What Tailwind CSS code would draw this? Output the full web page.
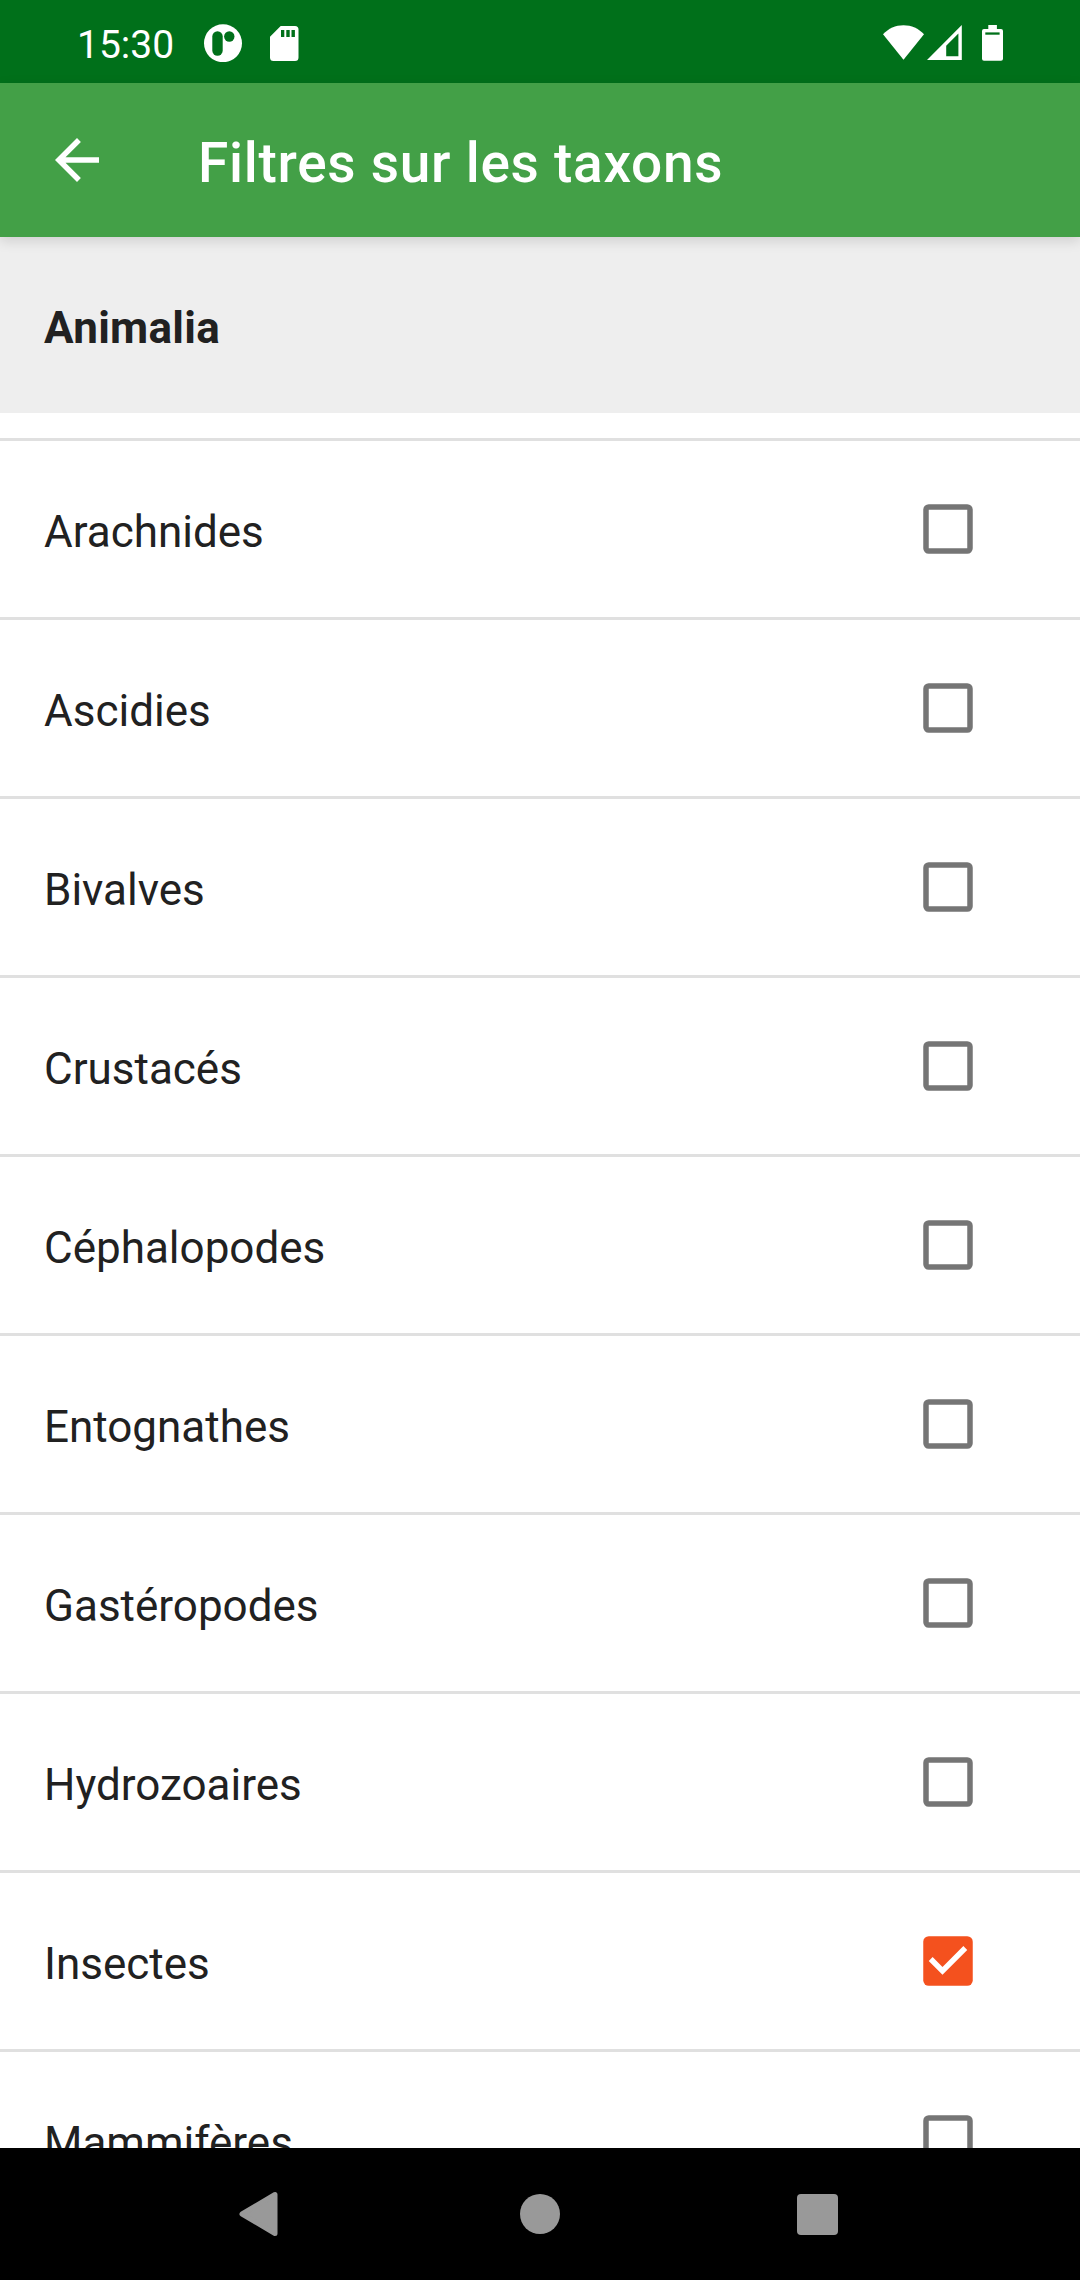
<!DOCTYPE html>
<html lang="fr">
<head>
<meta charset="utf-8">
<title>Filtres sur les taxons</title>
<script src="https://cdn.jsdelivr.net/npm/@tailwindcss/browser@4"></script>
</head>
<body class="bg-white">
<div class="flex h-[2280px] w-[1080px] flex-col overflow-hidden font-[Roboto,sans-serif] text-[#212121]">
  <div class="flex h-[83px] shrink-0 items-start bg-[#00701a] pl-[77px] text-white">
    <span class="mt-[21px] w-[114px] text-[39px] leading-[48px] whitespace-nowrap">15:30</span>
    <svg class="mt-6 ml-[13px] h-[38px] w-[38px]" viewBox="0 0 38 38"><circle cx="19" cy="19.2" r="19" fill="#fff"/><rect x="8.3" y="7.3" width="10.4" height="24.5" rx="5.2" fill="#00701a"/><circle cx="25.3" cy="12.5" r="5.2" fill="#00701a"/></svg>
    <svg class="mt-[26px] ml-7 h-[35px] w-[29px]" viewBox="0 0 29 35"><path d="M10.7 0H25a3.5 3.5 0 0 1 3.5 3.5V31.500a3.500 3.500 0 0 1-3.500 3.500H3.500A3.500 3.500 0 0 1 0 31.500V10.700z" fill="#fff"/><path d="M11 4h3.300v7H11zM16.300 4h3.400v7h-3.400zM21.500 4h3.400v7h-3.400z" fill="#00701a"/></svg>
    <svg class="mt-[25px] ml-[584px] h-[35px] w-[41px]" viewBox="0 0 41 35"><path d="M0 9.300C5.500 3.500 12.500.3 20.500.3S35.500 3.500 41 9.300L20.500 34.700z" fill="#fff"/></svg>
    <svg class="mt-[25px] ml-[3px] h-[35px] w-[35px]" viewBox="0 0 35 35"><path fill-rule="evenodd" d="M34.800 0V35H0zM31.400 8.500L19.200 20.700V31.300H31.400z" fill="#fff"/></svg>
    <svg class="mt-[25px] ml-5 h-9 w-[21px]" viewBox="0 0 21 36"><path d="M6.300 0H14.900V4H19a2 2 0 0 1 2 2V33.700a2 2 0 0 1-2 2H2a2 2 0 0 1-2-2V6a2 2 0 0 1 2-2H6.300z" fill="#fff"/><path d="M3.300 7.400h14.300v2.300H3.300z" fill="#00701a"/></svg>
  </div>
  <header class="relative z-10 flex h-[154px] shrink-0 items-center bg-[#43a047] pl-11 text-white shadow-[0_4px_12px_rgba(0,0,0,0.13)]">
    <svg class="size-[66px]" viewBox="0 0 24 24"><path d="M20 11H7.830l5.590-5.590L12 4l-8 8 8 8 1.410-1.410L7.830 13H20v-2z" fill="#fff"/></svg>
    <h1 class="ml-[88px] pt-1.5 text-[55px] leading-[64px] font-medium tracking-[0.72px] whitespace-nowrap">Filtres sur les taxons</h1>
  </header>
  <main class="min-h-0 flex-1 overflow-hidden">
    <h2 class="mb-[25px] h-44 bg-[#eee] pt-[65px] pl-11 text-[44px] leading-[52px] font-bold tracking-[0.3px]">Animalia</h2>
    <ul id="taxa"></ul>
  </main>
  <nav class="flex h-[132px] shrink-0 items-center bg-black pl-[239px]">
    <svg class="h-[46px] w-10" viewBox="0 0 40 46"><path d="M36 3.500V42.500L3 23z" fill="#999" stroke="#999" stroke-width="5" stroke-linejoin="round"/></svg>
    <div class="ml-[241px] size-10 rounded-full bg-[#999]"></div>
    <div class="ml-[237px] size-[41px] rounded-[4px] bg-[#999]"></div>
  </nav>
</div>
<script>
  const taxa = ["Arachnides", "Ascidies", "Bivalves", "Crustacés", "Céphalopodes", "Entognathes", "Gastéropodes", "Hydrozoaires", "Insectes", "Mammifères"];
  const checked = new Set(["Insectes"]);
  const box = on => on
    ? '<rect x="3" y="3" width="18" height="18" rx="2" fill="#f4511e"/><path d="M10 17l-5-5 1.410-1.410L10 14.170l7.590-7.590L19 8z" fill="#fff"/>'
    : '<path d="M19 5v14H5V5h14m0-2H5a2 2 0 0 0-2 2v14a2 2 0 0 0 2 2h14a2 2 0 0 0 2-2V5a2 2 0 0 0-2-2z" fill="#757575"/>';
  document.getElementById("taxa").innerHTML = taxa.map(name => `
    <li class="flex h-[179px] items-center justify-between border-t-3 border-[#e0e0e0] pr-[99px] pl-11">
      <span class="pt-1.5 text-[44px] leading-[52px]">${name}</span>
      <svg class="size-[66px]" viewBox="0 0 24 24">${box(checked.has(name))}</svg>
    </li>`).join("");
</script>
</body>
</html>
